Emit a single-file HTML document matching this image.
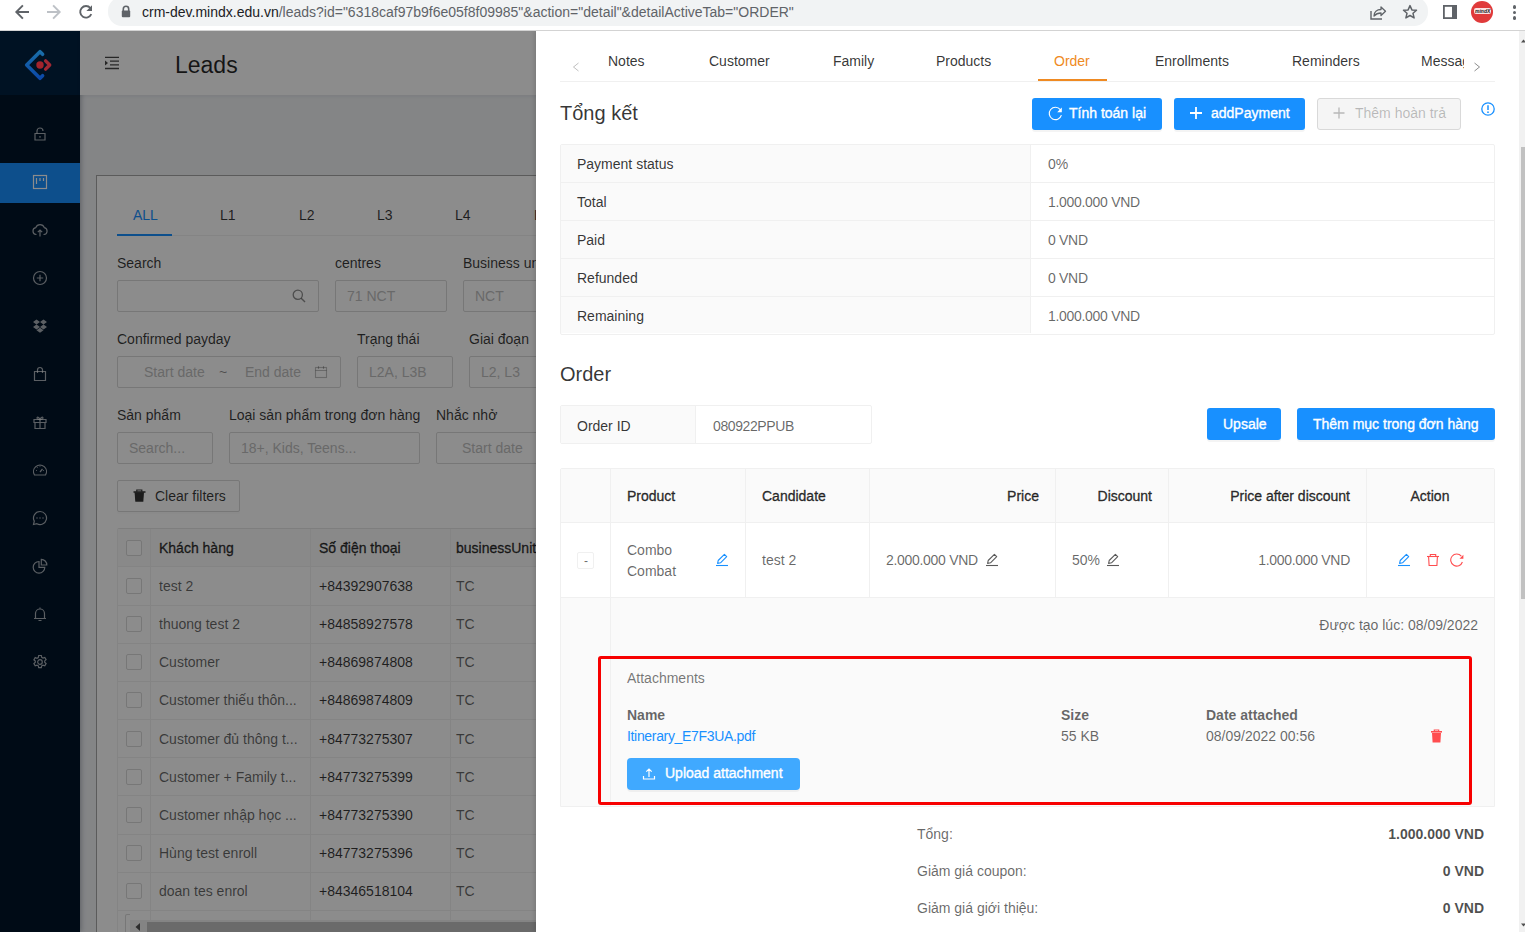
<!DOCTYPE html>
<html><head><meta charset="utf-8">
<style>
*{box-sizing:border-box;margin:0;padding:0}
html,body{width:1525px;height:932px;overflow:hidden;background:#fff;font-family:"Liberation Sans",sans-serif;font-size:14px;color:rgba(0,0,0,.85)}
.a{position:absolute}
.t{position:absolute;white-space:nowrap;line-height:22px;font-size:14px}
#bar{position:absolute;left:0;top:0;width:1525px;height:31px;background:#fff;border-bottom:1px solid #d3d3d3;z-index:5}
#pill{position:absolute;left:108px;top:-3px;width:1320px;height:29px;border-radius:14px;background:#f1f3f4}
#app{position:absolute;left:0;top:31px;width:1525px;height:901px;overflow:hidden;background:#f0f2f5}
#side{position:absolute;left:0;top:0;width:80px;height:901px;background:#001529;box-shadow:1px 0 5px rgba(0,21,41,.3)}
#logo{position:absolute;left:0;top:0;width:80px;height:64px;background:#002140}
.mi{position:absolute;left:0;width:80px;height:40px}
.mi svg{position:absolute;left:32px;top:12px}
#hdr{position:absolute;left:80px;top:0;width:1445px;height:64px;background:#fff;box-shadow:0 1px 4px rgba(0,21,41,.08)}
#card{position:absolute;left:96px;top:144px;width:1420px;height:800px;background:#fff;border:1px solid #a6a6a6}
.lbl{position:absolute;white-space:nowrap;line-height:22px;color:rgba(0,0,0,.85)}
.inp{position:absolute;height:32px;border:1px solid #d9d9d9;border-radius:2px;background:#fff;color:#bfbfbf;line-height:30px;padding-left:11px;white-space:nowrap;overflow:hidden}
#mask{position:absolute;left:0;top:0;width:1525px;height:901px;background:rgba(0,0,0,.45)}
#drawer{position:absolute;left:536px;top:0;width:989px;height:901px;background:#fff;box-shadow:-2px 0 4px rgba(0,0,0,.12)}
.btn{position:absolute;height:32px;border-radius:2px;background:#1890ff;color:#fff;-webkit-text-stroke:.35px currentColor;line-height:30px;text-align:center;white-space:nowrap;border:1px solid #1890ff;box-shadow:0 2px 0 rgba(0,0,0,.045)}
.row{position:absolute;left:0;width:935px;height:38px;border-bottom:1px solid #f0f0f0}
</style></head><body>
<div id="bar">
  <svg class="a" style="left:14px;top:4px" width="16" height="16" viewBox="0 0 16 16"><path d="M15 8H2.3M8.9 1.3L2.3 8l6.6 6.7" fill="none" stroke="#5f6368" stroke-width="1.9"/></svg>
  <svg class="a" style="left:46px;top:4px" width="16" height="16" viewBox="0 0 16 16"><path d="M1 8h12.7M7.1 1.3L13.7 8l-6.6 6.7" fill="none" stroke="#bdc1c6" stroke-width="1.9"/></svg>
  <svg class="a" style="left:78px;top:4px" width="16" height="16" viewBox="0 0 16 16"><path d="M13.3 10.2A5.8 5.8 0 1 1 12.4 4" fill="none" stroke="#5f6368" stroke-width="1.9"/><path d="M14 1.3V7H8.4z" fill="#5f6368"/></svg>
  <div id="pill"></div>
  <svg class="a" style="left:121px;top:5px" width="10" height="13" viewBox="0 0 10 13"><path d="M2.3 6V4a2.7 2.7 0 0 1 5.4 0v2" fill="none" stroke="#5f6368" stroke-width="1.6"/><rect x="0.8" y="5.6" width="8.4" height="6.6" rx="1" fill="#5f6368"/></svg>
  <div class="t" style="left:142px;top:1px;color:#5f6368;font-size:14px"><span style="color:#202124">crm-dev.mindx.edu.vn</span>/leads?id="6318caf97b9f6e05f8f09985"&amp;action="detail"&amp;detailActiveTab="ORDER"</div>
  <svg class="a" style="left:1370px;top:5px" width="17" height="15" viewBox="0 0 17 15"><path d="M1 6v8h11" fill="none" stroke="#5f6368" stroke-width="1.4"/><path d="M4 11c0-4 3-6.5 7-6.5V2l4.5 4.2L11 10.5V8C8 8 5.8 9 4 11z" fill="none" stroke="#5f6368" stroke-width="1.3" stroke-linejoin="round"/></svg>
  <svg class="a" style="left:1402px;top:4px" width="16" height="16" viewBox="0 0 16 16"><path d="M8 1.6l1.9 4.3 4.6.4-3.5 3 1.1 4.6L8 11.5l-4.1 2.4 1.1-4.6-3.5-3 4.6-.4z" fill="none" stroke="#5f6368" stroke-width="1.5" stroke-linejoin="round"/></svg>
  <svg class="a" style="left:1443px;top:5px" width="14" height="14" viewBox="0 0 14 14"><rect x="0.9" y="0.9" width="12.2" height="12.2" fill="none" stroke="#5f6368" stroke-width="1.8"/><rect x="9" y="1" width="4" height="12" fill="#5f6368"/></svg>
  <div class="a" style="left:1471px;top:1px;width:22px;height:22px;border-radius:50%;background:#e03a3a"></div>
  <div class="a" style="left:1474px;top:8px;width:17px;height:6px;border-radius:2px;background:#fff;opacity:.85"></div>
  <div class="a" style="left:1475px;top:8.5px;font-size:5px;line-height:5px;color:#222;font-weight:bold;font-style:italic">mindX</div>
  <div class="a" style="left:1512.5px;top:5px;width:3.5px;height:3.5px;border-radius:50%;background:#5f6368"></div>
  <div class="a" style="left:1512.5px;top:10.5px;width:3.5px;height:3.5px;border-radius:50%;background:#5f6368"></div>
  <div class="a" style="left:1512.5px;top:16px;width:3.5px;height:3.5px;border-radius:50%;background:#5f6368"></div>
</div>
<div id="app">
  <div id="side">
    <div id="logo"></div>
    <div class="mi" style="top:132px;background:#1890ff"></div>
    <svg class="a" style="left:32px;top:95px" width="16" height="16" viewBox="0 0 16 16"><path d="M3 7.5h10v6.5H3z" stroke="rgba(255,255,255,.65)" fill="none" stroke-width="1.2"/><path d="M5 7.5V5a3 3 0 0 1 6 0" stroke="rgba(255,255,255,.65)" fill="none" stroke-width="1.2"/><path d="M8 10v1.8" stroke="rgba(255,255,255,.65)" fill="none" stroke-width="1.2"/></svg>
    <svg class="a" style="left:32px;top:143px" width="16" height="16" viewBox="0 0 16 16"><rect x="1.5" y="1.5" width="13" height="13" stroke="#fff" fill="none" stroke-width="1.2"/><path d="M4.5 4v6M8 4v3M11.5 4v3" stroke="#fff" fill="none" stroke-width="1.2"/></svg>
    <svg class="a" style="left:32px;top:191px" width="16" height="16" viewBox="0 0 16 16"><path d="M4.5 12.5H4A3.5 3.5 0 0 1 3.8 5.6 4.5 4.5 0 0 1 12.3 5.6 3.5 3.5 0 0 1 12 12.5h-.5" stroke="rgba(255,255,255,.65)" fill="none" stroke-width="1.2"/><path d="M8 14.5V8M5.8 10.2L8 8l2.2 2.2" stroke="rgba(255,255,255,.65)" fill="none" stroke-width="1.2"/></svg>
    <svg class="a" style="left:32px;top:239px" width="16" height="16" viewBox="0 0 16 16"><circle cx="8" cy="8" r="6.5" stroke="rgba(255,255,255,.65)" fill="none" stroke-width="1.2"/><path d="M8 4.8v6.4M4.8 8h6.4" stroke="rgba(255,255,255,.65)" fill="none" stroke-width="1.2"/></svg>
    <svg class="a" style="left:32px;top:287px" width="16" height="16" viewBox="0 0 16 16"><path d="M4.5 1.5L1 4l3.5 2.5L1 9l3.5 2.5L8 9l3.5 2.5L15 9l-3.5-2.5L15 4l-3.5-2.5L8 4zM4.5 6.5L8 4l3.5 2.5L8 9zM4.5 12.3L8 14.8l3.5-2.5L8 9.8z" fill="rgba(255,255,255,.65)"/></svg>
    <svg class="a" style="left:32px;top:335px" width="16" height="16" viewBox="0 0 16 16"><path d="M2.5 5.5h11v9h-11z" stroke="rgba(255,255,255,.65)" fill="none" stroke-width="1.2"/><path d="M5.5 7V4a2.5 2.5 0 0 1 5 0v3" stroke="rgba(255,255,255,.65)" fill="none" stroke-width="1.2"/></svg>
    <svg class="a" style="left:32px;top:383px" width="16" height="16" viewBox="0 0 16 16"><path d="M2 5.5h12v3H2zM3 8.5h10v6H3zM8 5.5v9" stroke="rgba(255,255,255,.65)" fill="none" stroke-width="1.2"/><path d="M8 5.5C6.5 2 4.5 3 5.2 4.5 5.6 5.3 8 5.5 8 5.5 8 5.5 10.4 5.3 10.8 4.5 11.5 3 9.5 2 8 5.5z" stroke="rgba(255,255,255,.65)" fill="none" stroke-width="1.2"/></svg>
    <svg class="a" style="left:32px;top:431px" width="16" height="16" viewBox="0 0 16 16"><path d="M2.5 13A6.5 6.5 0 1 1 13.5 13z" stroke="rgba(255,255,255,.65)" fill="none" stroke-width="1.2"/><path d="M8 10l2.5-3" stroke="rgba(255,255,255,.65)" fill="none" stroke-width="1.2"/><path d="M4 8.5h.8M11.2 8.5h.8M8 3.8v.8M5 5.3l.5.5" stroke="rgba(255,255,255,.65)" fill="none" stroke-width="1.2"/></svg>
    <svg class="a" style="left:32px;top:479px" width="16" height="16" viewBox="0 0 16 16"><path d="M8 1.5a6.5 6.5 0 0 0-5.7 9.6L1.5 14.5l3.4-.8A6.5 6.5 0 1 0 8 1.5z" stroke="rgba(255,255,255,.65)" fill="none" stroke-width="1.2"/><circle cx="5" cy="8" r=".7" fill="rgba(255,255,255,.65)"/><circle cx="8" cy="8" r=".7" fill="rgba(255,255,255,.65)"/><circle cx="11" cy="8" r=".7" fill="rgba(255,255,255,.65)"/></svg>
    <svg class="a" style="left:32px;top:527px" width="16" height="16" viewBox="0 0 16 16"><path d="M7 3.5A5.8 5.8 0 1 0 12.8 9.3H7z" stroke="rgba(255,255,255,.65)" fill="none" stroke-width="1.2"/><path d="M9.3 1.3V7h5.5A5.6 5.6 0 0 0 9.3 1.3z" stroke="rgba(255,255,255,.65)" fill="none" stroke-width="1.2"/></svg>
    <svg class="a" style="left:32px;top:575px" width="16" height="16" viewBox="0 0 16 16"><path d="M3.5 12.5V7.5a4.5 4.5 0 0 1 9 0v5M2 12.5h12M6.5 14.5h3M8 1.5v1.5" stroke="rgba(255,255,255,.65)" fill="none" stroke-width="1.2"/></svg>
    <svg class="a" style="left:32px;top:623px" width="16" height="16" viewBox="0 0 16 16"><circle cx="8" cy="8" r="2.3" stroke="rgba(255,255,255,.65)" fill="none" stroke-width="1.2"/><path d="M6.7 1.5h2.6l.4 1.9 1.3.7 1.8-.7 1.3 2.2-1.4 1.3v1.4l1.4 1.3-1.3 2.2-1.8-.7-1.3.7-.4 1.9H6.7l-.4-1.9-1.3-.7-1.8.7-1.3-2.2 1.4-1.3V7.1L1.9 5.8l1.3-2.2 1.8.7 1.3-.7z" stroke="rgba(255,255,255,.65)" fill="none" stroke-width="1.2"/></svg>
  </div>
  <div id="hdr">
    <svg class="a" style="left:24px;top:24px" width="16" height="15" viewBox="0 0 16 15"><path d="M1 2.4h14M6 6.2h9M6 9.9h9M1 13.5h14" stroke="#000" stroke-opacity=".72" stroke-width="1.3"/><path d="M1 5.5v5l3-2.5z" fill="#000" fill-opacity=".72"/></svg>
    <div class="t" style="left:95px;top:18px;font-size:23px;line-height:32px;color:rgba(0,0,0,.85)">Leads</div>
  </div>
  <div id="card"></div>
<div class="t" style="left:133px;top:173.0px;color:#1890ff">ALL</div>
<div class="t" style="left:220px;top:173.0px;color:rgba(0,0,0,.78)">L1</div>
<div class="t" style="left:299px;top:173.0px;color:rgba(0,0,0,.78)">L2</div>
<div class="t" style="left:377px;top:173.0px;color:rgba(0,0,0,.78)">L3</div>
<div class="t" style="left:455px;top:173.0px;color:rgba(0,0,0,.78)">L4</div>
<div class="t" style="left:534px;top:173.0px;color:rgba(0,0,0,.78)">L5</div>
<div class="a" style="left:117px;top:204px;width:1400px;height:1px;background:#f0f0f0"></div>
<div class="a" style="left:117px;top:203px;width:55px;height:2px;background:#1890ff"></div>
<div class="t" style="left:117px;top:221.0px;color:rgba(0,0,0,.78)">Search</div>
<div class="t" style="left:335px;top:221.0px;color:rgba(0,0,0,.78)">centres</div>
<div class="t" style="left:463px;top:221.0px;color:rgba(0,0,0,.78)">Business unit</div>
<div class="t" style="left:117px;top:297.0px;color:rgba(0,0,0,.78)">Confirmed payday</div>
<div class="t" style="left:357px;top:297.0px;color:rgba(0,0,0,.78)">Trạng thái</div>
<div class="t" style="left:469px;top:297.0px;color:rgba(0,0,0,.78)">Giai đoạn</div>
<div class="t" style="left:117px;top:373.0px;color:rgba(0,0,0,.78)">Sản phẩm</div>
<div class="t" style="left:229px;top:373.0px;color:rgba(0,0,0,.78)">Loại sản phẩm trong đơn hàng</div>
<div class="t" style="left:436px;top:373.0px;color:rgba(0,0,0,.78)">Nhắc nhở</div>
<div class="inp" style="left:117px;top:249px;width:202px;"></div>
<svg class="a" style="left:292px;top:258px" width="14" height="14" viewBox="0 0 14 14"><circle cx="5.8" cy="5.8" r="4.6" fill="none" stroke="rgba(0,0,0,.45)" stroke-width="1.3"/><path d="M9.2 9.2l3.8 3.8" stroke="rgba(0,0,0,.45)" stroke-width="1.4"/></svg>
<div class="inp" style="left:335px;top:249px;width:112px;">71 NCT</div>
<div class="inp" style="left:463px;top:249px;width:200px;">NCT</div>
<div class="inp" style="left:117px;top:325px;width:224px;"><span style="position:absolute;left:26px">Start date</span><span style="position:absolute;left:101px;color:rgba(0,0,0,.45)">~</span><span style="position:absolute;left:127px">End date</span></div>
<svg class="a" style="left:314px;top:334px" width="14" height="14" viewBox="0 0 14 14"><rect x="1.5" y="2.5" width="11" height="10" fill="none" stroke="rgba(0,0,0,.25)" stroke-width="1.1"/><path d="M1.5 5.5h11M4.5 1v3M9.5 1v3" stroke="rgba(0,0,0,.25)" stroke-width="1.1"/></svg>
<div class="inp" style="left:357px;top:325px;width:96px;">L2A, L3B</div>
<div class="inp" style="left:469px;top:325px;width:200px;">L2, L3</div>
<div class="inp" style="left:117px;top:401px;width:96px;">Search...</div>
<div class="inp" style="left:229px;top:401px;width:191px;">18+, Kids, Teens...</div>
<div class="inp" style="left:436px;top:401px;width:200px;"><span style="position:absolute;left:25px">Start date</span></div>
<div class="a" style="left:117px;top:449px;width:123px;height:32px;border:1px solid #d9d9d9;border-radius:2px;background:#fff;box-shadow:0 2px 0 rgba(0,0,0,.016)"></div>
<svg class="a" style="left:133px;top:458px" width="14" height="14" viewBox="0 0 14 14"><path d="M0.5 3h12" stroke="rgba(0,0,0,.8)" stroke-width="1.5"/><path d="M3.8 2.6V1h5v1.6" fill="none" stroke="rgba(0,0,0,.8)" stroke-width="1.2"/><path d="M1.6 3.5h9.4l-.7 9.3H2.3z" fill="rgba(0,0,0,.8)"/></svg>
<div class="t" style="left:155px;top:454.0px;color:rgba(0,0,0,.78)">Clear filters</div>
<div class="a" style="left:117px;top:497px;width:1400px;height:414px;border-left:1px solid #f0f0f0;border-top:1px solid #e6e6e6;border-radius:2px 0 0 0"></div>
<div class="a" style="left:118px;top:498px;width:1400px;height:38px;background:#fafafa;border-bottom:1px solid #f0f0f0"></div>
<div class="a" style="left:118px;top:573.56px;width:1400px;height:1px;background:#f0f0f0"></div>
<div class="a" style="left:118px;top:611.72px;width:1400px;height:1px;background:#f0f0f0"></div>
<div class="a" style="left:118px;top:649.88px;width:1400px;height:1px;background:#f0f0f0"></div>
<div class="a" style="left:118px;top:688.04px;width:1400px;height:1px;background:#f0f0f0"></div>
<div class="a" style="left:118px;top:726.20px;width:1400px;height:1px;background:#f0f0f0"></div>
<div class="a" style="left:118px;top:764.36px;width:1400px;height:1px;background:#f0f0f0"></div>
<div class="a" style="left:118px;top:802.52px;width:1400px;height:1px;background:#f0f0f0"></div>
<div class="a" style="left:118px;top:840.68px;width:1400px;height:1px;background:#f0f0f0"></div>
<div class="a" style="left:118px;top:878.84px;width:1400px;height:1px;background:#f0f0f0"></div>
<div class="a" style="left:150px;top:498px;width:1px;height:403px;background:#f0f0f0"></div>
<div class="a" style="left:310px;top:498px;width:1px;height:403px;background:#f0f0f0"></div>
<div class="a" style="left:450px;top:498px;width:1px;height:403px;background:#f0f0f0"></div>
<div class="a" style="left:126px;top:509px;width:16px;height:16px;border:1px solid #d9d9d9;border-radius:2px;background:#fff"></div>
<div class="t" style="left:159px;top:506.0px;-webkit-text-stroke:.35px currentColor;color:rgba(0,0,0,.78)">Khách hàng</div>
<div class="t" style="left:319px;top:506.0px;-webkit-text-stroke:.35px currentColor;color:rgba(0,0,0,.78)">Số điện thoại</div>
<div class="t" style="left:456px;top:506.0px;-webkit-text-stroke:.35px currentColor;color:rgba(0,0,0,.78)">businessUnit</div>
<div class="a" style="left:126px;top:547.00px;width:16px;height:16px;border:1px solid #d9d9d9;border-radius:2px;background:#fff"></div>
<div class="t" style="left:159px;top:544.00px;color:rgba(0,0,0,.6)">test 2</div>
<div class="t" style="left:319px;top:544.00px;color:rgba(0,0,0,.78)">+84392907638</div>
<div class="t" style="left:456px;top:544.00px;color:rgba(0,0,0,.6)">TC</div>
<div class="a" style="left:126px;top:585.16px;width:16px;height:16px;border:1px solid #d9d9d9;border-radius:2px;background:#fff"></div>
<div class="t" style="left:159px;top:582.16px;color:rgba(0,0,0,.6)">thuong test 2</div>
<div class="t" style="left:319px;top:582.16px;color:rgba(0,0,0,.78)">+84858927578</div>
<div class="t" style="left:456px;top:582.16px;color:rgba(0,0,0,.6)">TC</div>
<div class="a" style="left:126px;top:623.32px;width:16px;height:16px;border:1px solid #d9d9d9;border-radius:2px;background:#fff"></div>
<div class="t" style="left:159px;top:620.32px;color:rgba(0,0,0,.6)">Customer</div>
<div class="t" style="left:319px;top:620.32px;color:rgba(0,0,0,.78)">+84869874808</div>
<div class="t" style="left:456px;top:620.32px;color:rgba(0,0,0,.6)">TC</div>
<div class="a" style="left:126px;top:661.48px;width:16px;height:16px;border:1px solid #d9d9d9;border-radius:2px;background:#fff"></div>
<div class="t" style="left:159px;top:658.48px;color:rgba(0,0,0,.6)">Customer thiếu thôn...</div>
<div class="t" style="left:319px;top:658.48px;color:rgba(0,0,0,.78)">+84869874809</div>
<div class="t" style="left:456px;top:658.48px;color:rgba(0,0,0,.6)">TC</div>
<div class="a" style="left:126px;top:699.64px;width:16px;height:16px;border:1px solid #d9d9d9;border-radius:2px;background:#fff"></div>
<div class="t" style="left:159px;top:696.64px;color:rgba(0,0,0,.6)">Customer đủ thông t...</div>
<div class="t" style="left:319px;top:696.64px;color:rgba(0,0,0,.78)">+84773275307</div>
<div class="t" style="left:456px;top:696.64px;color:rgba(0,0,0,.6)">TC</div>
<div class="a" style="left:126px;top:737.80px;width:16px;height:16px;border:1px solid #d9d9d9;border-radius:2px;background:#fff"></div>
<div class="t" style="left:159px;top:734.80px;color:rgba(0,0,0,.6)">Customer + Family t...</div>
<div class="t" style="left:319px;top:734.80px;color:rgba(0,0,0,.78)">+84773275399</div>
<div class="t" style="left:456px;top:734.80px;color:rgba(0,0,0,.6)">TC</div>
<div class="a" style="left:126px;top:775.96px;width:16px;height:16px;border:1px solid #d9d9d9;border-radius:2px;background:#fff"></div>
<div class="t" style="left:159px;top:772.96px;color:rgba(0,0,0,.6)">Customer nhập học ...</div>
<div class="t" style="left:319px;top:772.96px;color:rgba(0,0,0,.78)">+84773275390</div>
<div class="t" style="left:456px;top:772.96px;color:rgba(0,0,0,.6)">TC</div>
<div class="a" style="left:126px;top:814.12px;width:16px;height:16px;border:1px solid #d9d9d9;border-radius:2px;background:#fff"></div>
<div class="t" style="left:159px;top:811.12px;color:rgba(0,0,0,.6)">Hùng test enroll</div>
<div class="t" style="left:319px;top:811.12px;color:rgba(0,0,0,.78)">+84773275396</div>
<div class="t" style="left:456px;top:811.12px;color:rgba(0,0,0,.6)">TC</div>
<div class="a" style="left:126px;top:852.28px;width:16px;height:16px;border:1px solid #d9d9d9;border-radius:2px;background:#fff"></div>
<div class="t" style="left:159px;top:849.28px;color:rgba(0,0,0,.6)">doan tes enrol</div>
<div class="t" style="left:319px;top:849.28px;color:rgba(0,0,0,.78)">+84346518104</div>
<div class="t" style="left:456px;top:849.28px;color:rgba(0,0,0,.6)">TC</div>
<div class="a" style="left:126px;top:890.44px;width:16px;height:16px;border:1px solid #d9d9d9;border-radius:2px;background:#fff"></div>
<div class="a" style="left:118px;top:889px;width:1400px;height:20px;background:#fff"></div>
<div class="a" style="left:130px;top:889px;width:1400px;height:20px;background:#f1f1f1"></div>
<div class="a" style="left:147px;top:891px;width:1400px;height:20px;background:#c1c1c1"></div>
<svg class="a" style="left:134px;top:891px" width="8" height="10" viewBox="0 0 8 10"><path d="M6 1v8L1.5 5z" fill="#505050"/></svg>
<div class="a" style="left:125px;top:883px;width:5px;height:20px;border:1px solid #d9d9d9;border-right:none;border-radius:2px 0 0 0;background:#fff"></div>
  <div id="mask"></div>
  <svg class="a" style="left:23px;top:17px" width="34" height="34" viewBox="0 0 34 34">
      <defs><linearGradient id="lg" x1="0" y1="0" x2="0" y2="1"><stop offset="0" stop-color="#1a6ea8"/><stop offset="1" stop-color="#0b48a8"/></linearGradient></defs>
      <path d="M19.6 6.3L17 3.7 3.7 17 17 30.3l2.6-2.6" fill="none" stroke="url(#lg)" stroke-width="3.6" stroke-linecap="round" stroke-linejoin="round"/>
      <path d="M22.6 12.9L26.7 17l-4.1 4.1" fill="none" stroke="#a02833" stroke-width="3.4" stroke-linecap="round" stroke-linejoin="round"/>
      <circle cx="17" cy="17" r="3.7" fill="#a3242c"/>
    </svg>

  <div id="drawer">
<svg class="a" style="left:36px;top:31px" width="8" height="10" viewBox="0 0 8 10"><path d="M6.5 1L1.5 5l5 4" fill="none" stroke="rgba(0,0,0,.25)" stroke-width="1"/></svg>
<div class="t" style="left:72px;top:19.41px;font-size:14px;line-height:22px;color:rgba(0,0,0,.8)">Notes</div>
<div class="t" style="left:173px;top:19.41px;font-size:14px;line-height:22px;color:rgba(0,0,0,.8)">Customer</div>
<div class="t" style="left:297px;top:19.41px;font-size:14px;line-height:22px;color:rgba(0,0,0,.8)">Family</div>
<div class="t" style="left:400px;top:19.41px;font-size:14px;line-height:22px;color:rgba(0,0,0,.8)">Products</div>
<div class="t" style="left:619px;top:19.41px;font-size:14px;line-height:22px;color:rgba(0,0,0,.8)">Enrollments</div>
<div class="t" style="left:756px;top:19.41px;font-size:14px;line-height:22px;color:rgba(0,0,0,.8)">Reminders</div>
<div class="t" style="left:518px;top:19.41px;font-size:14px;line-height:22px;color:#ef8a22">Order</div>
<div class="a" style="left:885px;top:19px;width:43px;height:24px;overflow:hidden"><div class="t" style="left:0;top:0;color:rgba(0,0,0,.8)">Messages</div></div>
<svg class="a" style="left:937px;top:31px" width="8" height="10" viewBox="0 0 8 10"><path d="M1.5 1l5 4-5 4" fill="none" stroke="rgba(0,0,0,.45)" stroke-width="1"/></svg>
<div class="a" style="left:24px;top:50px;width:935px;height:1px;background:#f0f0f0"></div>
<div class="a" style="left:502px;top:48px;width:69px;height:2px;background:#ef8a22"></div>
<div class="t" style="left:24px;top:67.59px;font-size:20px;line-height:28px;color:rgba(0,0,0,.8)">Tổng kết</div>
<div class="a" style="left:496px;top:67px;width:130px;height:32px;background:#1890ff;border-radius:3px;box-shadow:0 2px 0 rgba(0,0,0,.045)"></div>
<svg class="a" style="left:512px;top:75px" width="15" height="15" viewBox="0 0 15 15"><path d="M13.4 9.2A6.2 6.2 0 1 1 12.3 3.6" fill="none" stroke="#fff" stroke-width="1.15"/><path d="M13.8 1.6v4.6H9.2z" fill="#fff"/></svg>
<div class="t" style="left:533px;top:71.41px;font-size:14px;line-height:22px;color:#fff;-webkit-text-stroke:.35px currentColor">Tính toán lại</div>
<div class="a" style="left:638px;top:67px;width:131px;height:32px;background:#1890ff;border-radius:3px;box-shadow:0 2px 0 rgba(0,0,0,.045)"></div>
<svg class="a" style="left:653px;top:75px" width="14" height="14" viewBox="0 0 14 14"><path d="M7 1v12M1 7h12" stroke="#fff" stroke-width="1.8"/></svg>
<div class="t" style="left:675px;top:71.41px;font-size:14px;line-height:22px;color:#fff;-webkit-text-stroke:.35px currentColor">addPayment</div>
<div class="a" style="left:781px;top:67px;width:144px;height:32px;background:#f5f5f5;border:1px solid #d9d9d9;border-radius:3px"></div>
<svg class="a" style="left:796px;top:75px" width="14" height="14" viewBox="0 0 14 14"><path d="M7 1.5v11M1.5 7h11" stroke="rgba(0,0,0,.25)" stroke-width="1.3"/></svg>
<div class="t" style="left:819px;top:71.41px;font-size:14px;line-height:22px;color:rgba(0,0,0,.25)">Thêm hoàn trả</div>
<svg class="a" style="left:945px;top:71px" width="14" height="14" viewBox="0 0 14 14"><circle cx="7" cy="7" r="6.2" fill="none" stroke="#1890ff" stroke-width="1.3"/><path d="M7 3.3v4.6" stroke="#1890ff" stroke-width="1.5"/><circle cx="7" cy="10.2" r=".85" fill="#1890ff"/></svg>
<div class="a" style="left:24px;top:113px;width:935px;height:191px;border:1px solid #f0f0f0;border-radius:2px"></div>
<div class="a" style="left:25px;top:114px;width:469px;height:188px;background:#fafafa"></div>
<div class="a" style="left:25px;top:151px;width:933px;height:1px;background:#f0f0f0"></div>
<div class="a" style="left:25px;top:189px;width:933px;height:1px;background:#f0f0f0"></div>
<div class="a" style="left:25px;top:227px;width:933px;height:1px;background:#f0f0f0"></div>
<div class="a" style="left:25px;top:265px;width:933px;height:1px;background:#f0f0f0"></div>
<div class="a" style="left:494px;top:114px;width:1px;height:188px;background:#f0f0f0"></div>
<div class="t" style="left:41px;top:122.41px;font-size:14px;line-height:22px;color:rgba(0,0,0,.8)">Payment status</div>
<div class="t" style="left:512px;top:122.41px;font-size:14px;line-height:22px;color:rgba(0,0,0,.6)">0%</div>
<div class="t" style="left:41px;top:160.41px;font-size:14px;line-height:22px;color:rgba(0,0,0,.8)">Total</div>
<div class="t" style="letter-spacing:-.3px;left:512px;top:160.41px;font-size:14px;line-height:22px;color:rgba(0,0,0,.6)">1.000.000 VND</div>
<div class="t" style="left:41px;top:198.41px;font-size:14px;line-height:22px;color:rgba(0,0,0,.8)">Paid</div>
<div class="t" style="letter-spacing:-.3px;left:512px;top:198.41px;font-size:14px;line-height:22px;color:rgba(0,0,0,.6)">0 VND</div>
<div class="t" style="left:41px;top:236.41px;font-size:14px;line-height:22px;color:rgba(0,0,0,.8)">Refunded</div>
<div class="t" style="letter-spacing:-.3px;left:512px;top:236.41px;font-size:14px;line-height:22px;color:rgba(0,0,0,.6)">0 VND</div>
<div class="t" style="left:41px;top:274.41px;font-size:14px;line-height:22px;color:rgba(0,0,0,.8)">Remaining</div>
<div class="t" style="letter-spacing:-.3px;left:512px;top:274.41px;font-size:14px;line-height:22px;color:rgba(0,0,0,.6)">1.000.000 VND</div>
<div class="t" style="left:24px;top:328.59px;font-size:20px;line-height:28px;color:rgba(0,0,0,.8)">Order</div>
<div class="a" style="left:24px;top:374px;width:312px;height:39px;border:1px solid #f0f0f0;border-radius:2px"></div>
<div class="a" style="left:25px;top:375px;width:135px;height:37px;background:#fafafa;border-right:1px solid #f0f0f0"></div>
<div class="t" style="left:41px;top:383.6px;font-size:14px;line-height:22px;color:rgba(0,0,0,.8)">Order ID</div>
<div class="t" style="left:177px;top:383.6px;letter-spacing:-.4px;font-size:14px;line-height:22px;color:rgba(0,0,0,.6)">080922PPUB</div>
<div class="a" style="left:671px;top:377px;width:74px;height:32px;background:#1890ff;border-radius:3px;box-shadow:0 2px 0 rgba(0,0,0,.045)"></div>
<div class="t" style="left:687px;top:382.41px;font-size:14px;line-height:22px;color:#fff;-webkit-text-stroke:.35px currentColor">Upsale</div>
<div class="a" style="left:761px;top:377px;width:198px;height:32px;background:#1890ff;border-radius:3px;box-shadow:0 2px 0 rgba(0,0,0,.045)"></div>
<div class="t" style="left:777px;top:382.41px;font-size:14px;line-height:22px;color:#fff;-webkit-text-stroke:.35px currentColor">Thêm mục trong đơn hàng</div>
<div class="a" style="left:24px;top:437px;width:935px;height:339px;border:1px solid #f0f0f0;border-radius:2px 2px 0 0"></div>
<div class="a" style="left:25px;top:438px;width:933px;height:53px;background:#fafafa"></div>
<div class="a" style="left:25px;top:491px;width:933px;height:1px;background:#f0f0f0"></div>
<div class="a" style="left:25px;top:566px;width:933px;height:1px;background:#f0f0f0"></div>
<div class="a" style="left:25px;top:567px;width:933px;height:208px;background:#fafafa"></div>
<div class="a" style="left:74px;top:438px;width:1px;height:337px;background:#f0f0f0"></div>
<div class="a" style="left:209px;top:438px;width:1px;height:128px;background:#f0f0f0"></div>
<div class="a" style="left:333px;top:438px;width:1px;height:128px;background:#f0f0f0"></div>
<div class="a" style="left:519px;top:438px;width:1px;height:128px;background:#f0f0f0"></div>
<div class="a" style="left:632px;top:438px;width:1px;height:128px;background:#f0f0f0"></div>
<div class="a" style="left:830px;top:438px;width:1px;height:128px;background:#f0f0f0"></div>
<div class="t" style="left:91px;top:454.41px;font-size:14px;line-height:22px;-webkit-text-stroke:.35px currentColor;color:rgba(0,0,0,.8)">Product</div>
<div class="t" style="left:226px;top:454.41px;font-size:14px;line-height:22px;-webkit-text-stroke:.35px currentColor;color:rgba(0,0,0,.8)">Candidate</div>
<div class="t" style="left:333px;width:170px;text-align:right;top:454.25px;-webkit-text-stroke:.35px currentColor;color:rgba(0,0,0,.8)">Price</div>
<div class="t" style="left:519px;width:97px;text-align:right;top:454.25px;-webkit-text-stroke:.35px currentColor;color:rgba(0,0,0,.8)">Discount</div>
<div class="t" style="left:632px;width:182px;text-align:right;top:454.25px;-webkit-text-stroke:.35px currentColor;color:rgba(0,0,0,.8)">Price after discount</div>
<div class="t" style="left:830px;width:128px;text-align:center;top:454.25px;-webkit-text-stroke:.35px currentColor;color:rgba(0,0,0,.8)">Action</div>
<div class="a" style="left:41px;top:521px;width:17px;height:17px;border:1px solid #f0f0f0;border-radius:2px;background:#fff"></div>
<div class="t" style="left:48px;top:519.35px;font-size:12px;line-height:22px;color:rgba(0,0,0,.6)">-</div>
<div class="t" style="left:91px;top:508.41px;font-size:14px;line-height:22px;color:rgba(0,0,0,.6)">Combo</div>
<div class="t" style="left:91px;top:529.41px;font-size:14px;line-height:22px;color:rgba(0,0,0,.6)">Combat</div>
<svg class="a" style="left:179px;top:522px" width="14" height="14" viewBox="0 0 14 14"><path d="M2.6 10.4l.6-2.9L9.4 1.3l2.3 2.3-6.2 6.2z" fill="none" stroke="#1890ff" stroke-width="1.1" stroke-linejoin="round"/><path d="M1 12.5h12" stroke="#1890ff" stroke-width="1.1"/></svg>
<div class="t" style="left:226px;top:518.41px;font-size:14px;line-height:22px;color:rgba(0,0,0,.6)">test 2</div>
<div class="t" style="letter-spacing:-.3px;left:350px;top:518.41px;font-size:14px;line-height:22px;color:rgba(0,0,0,.6)">2.000.000 VND</div>
<svg class="a" style="left:449px;top:522px" width="14" height="14" viewBox="0 0 14 14"><path d="M2.6 10.4l.6-2.9L9.4 1.3l2.3 2.3-6.2 6.2z" fill="none" stroke="rgba(0,0,0,.65)" stroke-width="1.1" stroke-linejoin="round"/><path d="M1 12.5h12" stroke="rgba(0,0,0,.65)" stroke-width="1.1"/></svg>
<div class="t" style="left:536px;top:518.41px;font-size:14px;line-height:22px;color:rgba(0,0,0,.6)">50%</div>
<svg class="a" style="left:570px;top:522px" width="14" height="14" viewBox="0 0 14 14"><path d="M2.6 10.4l.6-2.9L9.4 1.3l2.3 2.3-6.2 6.2z" fill="none" stroke="rgba(0,0,0,.65)" stroke-width="1.1" stroke-linejoin="round"/><path d="M1 12.5h12" stroke="rgba(0,0,0,.65)" stroke-width="1.1"/></svg>
<div class="t" style="letter-spacing:-.3px;left:632px;width:182px;text-align:right;top:518.25px;color:rgba(0,0,0,.6)">1.000.000 VND</div>
<svg class="a" style="left:861px;top:522px" width="14" height="14" viewBox="0 0 14 14"><path d="M2.6 10.4l.6-2.9L9.4 1.3l2.3 2.3-6.2 6.2z" fill="none" stroke="#1890ff" stroke-width="1.1" stroke-linejoin="round"/><path d="M1 12.5h12" stroke="#1890ff" stroke-width="1.1"/></svg>
<svg class="a" style="left:890px;top:522px" width="14" height="14" viewBox="0 0 14 14"><path d="M1 3.5h12" stroke="#ff4d4f" stroke-width="1.1"/><path d="M4.3 3.3V1.5h5.4v1.8" fill="none" stroke="#ff4d4f" stroke-width="1.1"/><path d="M2.6 3.8l.5 8.7h7.8l.5-8.7" fill="none" stroke="#ff4d4f" stroke-width="1.1"/></svg>
<svg class="a" style="left:914px;top:522px" width="14" height="14" viewBox="0 0 14 14"><path d="M12.4 9A6 6 0 1 1 11.3 3.2" fill="none" stroke="#ff4d4f" stroke-width="1.1"/><path d="M13.4 1.8v3.9H9.5z" fill="#ff4d4f"/></svg>
<div class="t" style="left:700px;width:242px;text-align:right;top:583.41px;font-size:14px;line-height:22px;color:rgba(0,0,0,.6)">Được tạo lúc: 08/09/2022</div>
<div class="t" style="left:91px;top:636.41px;font-size:14px;line-height:22px;color:rgba(0,0,0,.55)">Attachments</div>
<div class="t" style="left:91px;top:673.41px;font-size:14px;line-height:22px;font-weight:bold;color:rgba(0,0,0,.6)">Name</div>
<div class="t" style="left:91px;top:694.41px;font-size:14px;line-height:22px;color:#1890ff;letter-spacing:-.33px">Itinerary_E7F3UA.pdf</div>
<div class="t" style="left:525px;top:673.41px;font-size:14px;line-height:22px;font-weight:bold;color:rgba(0,0,0,.6)">Size</div>
<div class="t" style="left:525px;top:694.41px;font-size:14px;line-height:22px;color:rgba(0,0,0,.6)">55 KB</div>
<div class="t" style="left:670px;top:673.41px;font-size:14px;line-height:22px;font-weight:bold;color:rgba(0,0,0,.6)">Date attached</div>
<div class="t" style="left:670px;top:694.41px;font-size:14px;line-height:22px;color:rgba(0,0,0,.6)">08/09/2022 00:56</div>
<svg class="a" style="left:894px;top:698px" width="13" height="14" viewBox="0 0 13 14"><path d="M1 2.8h11" stroke="#ff4d4f" stroke-width="1.6"/><path d="M4.3 2.5V1h4.4v1.5" fill="none" stroke="#ff4d4f" stroke-width="1.2"/><path d="M2 4h9l-.6 9.5H2.6z" fill="#ff4d4f"/></svg>
<div class="a" style="left:91px;top:727px;width:173px;height:32px;background:#40a9ff;border-radius:4px;box-shadow:0 2px 0 rgba(0,0,0,.045)"></div>
<svg class="a" style="left:106px;top:736px" width="14" height="14" viewBox="0 0 14 14"><path d="M7 2v8M4.3 4.7L7 2l2.7 2.7M1.5 9v3h11V9" fill="none" stroke="#fff" stroke-width="1.2"/></svg>
<div class="t" style="left:129px;top:731.41px;font-size:14px;line-height:22px;color:#fff;-webkit-text-stroke:.35px currentColor">Upload attachment</div>
<div class="a" style="left:62px;top:625px;width:874px;height:149px;border:3px solid #f70000;border-radius:3px"></div>
<div class="t" style="left:381px;top:792.41px;font-size:14px;line-height:22px;color:rgba(0,0,0,.6)">Tổng:</div>
<div class="t" style="left:381px;top:829.41px;font-size:14px;line-height:22px;color:rgba(0,0,0,.6)">Giảm giá coupon:</div>
<div class="t" style="left:381px;top:866.41px;font-size:14px;line-height:22px;color:rgba(0,0,0,.6)">Giảm giá giới thiệu:</div>
<div class="t" style="left:564px;width:384px;text-align:right;top:792.25px;font-weight:bold;color:rgba(0,0,0,.7)">1.000.000 VND</div>
<div class="t" style="left:564px;width:384px;text-align:right;top:829.25px;font-weight:bold;color:rgba(0,0,0,.7)">0 VND</div>
<div class="t" style="left:564px;width:384px;text-align:right;top:866.25px;font-weight:bold;color:rgba(0,0,0,.7)">0 VND</div>
<div class="a" style="left:983px;top:0px;width:6px;height:901px;background:#f1f1f1"></div>
<div class="a" style="left:985px;top:116px;width:4px;height:452px;background:#c1c1c1"></div>
<svg class="a" style="left:985px;top:8px" width="4" height="4" viewBox="0 0 4 4"><path d="M0 3.5L2.5 0.5 5 3.5z" fill="#505050"/></svg>
<svg class="a" style="left:985px;top:892px" width="4" height="4" viewBox="0 0 4 4"><path d="M0 0.5L2.5 3.5 5 0.5z" fill="#505050"/></svg>
</div>
</div>
</body></html>
